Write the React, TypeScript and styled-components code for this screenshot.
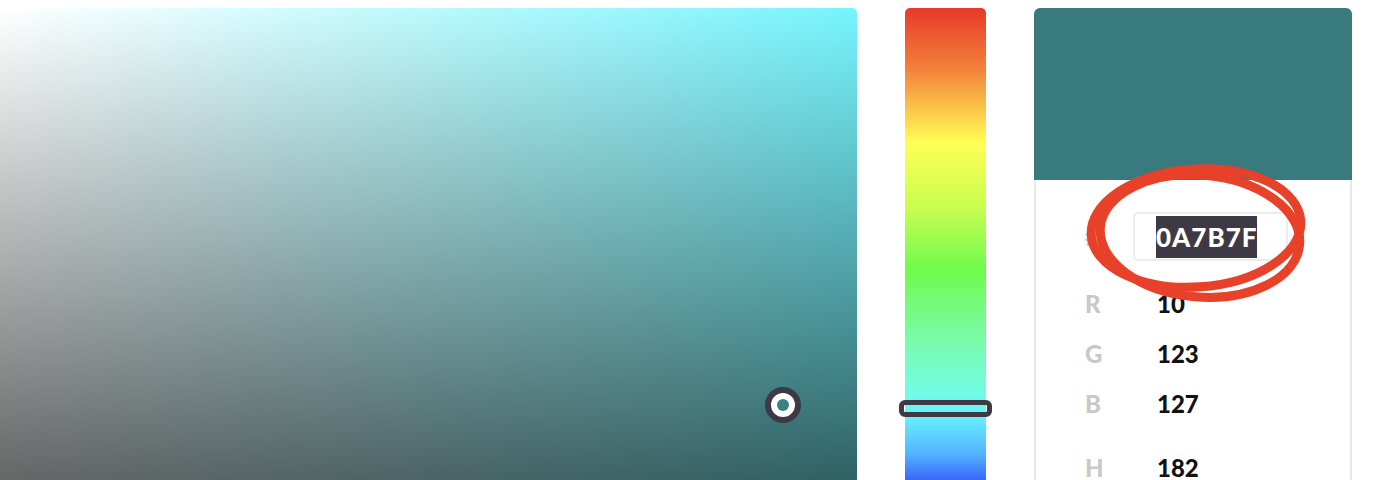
import React from 'react'
import styled, { createGlobalStyle } from 'styled-components'

const GlobalStyle = createGlobalStyle`
  html, body {
    margin: 0;
    padding: 0;
    background: #ffffff;
    overflow: hidden;
  }
  body {
    font-family: 'Lato', 'Liberation Sans', sans-serif;
  }
`

const INK = '#3d3a45'

const channels = [
  { label: 'R', value: '10' },
  { label: 'G', value: '123' },
  { label: 'B', value: '127' },
]

export default function App(): JSX.Element {
  return (
    <>
      <GlobalStyle />
      <Page>
        <Field>
          <Handle>
            <Dot />
          </Handle>
        </Field>
        <HueStrip>
          <HueMarker />
        </HueStrip>
        <Panel>
          <Swatch />
          <Body>
            <HexRow>
              <Label>#</Label>
              <HexBox>
                <Selected>0A7B7F</Selected>
              </HexBox>
            </HexRow>
            {channels.map((c) => (
              <Row key={c.label}>
                <Label>{c.label}</Label>
                <Value>{c.value}</Value>
              </Row>
            ))}
            <Row $gap>
              <Label>H</Label>
              <Value>182</Value>
            </Row>
          </Body>
          <Scribble viewBox="0 0 240 150" width="240" height="150">
            <ellipse
              cx="116"
              cy="68"
              rx="105"
              ry="59"
              transform="rotate(-4 116 68)"
              fill="none"
              stroke="#e8412a"
              strokeWidth="9"
            />
            <ellipse
              cx="120"
              cy="76"
              rx="100"
              ry="61"
              transform="rotate(5 120 76)"
              fill="none"
              stroke="#e8412a"
              strokeWidth="9"
            />
          </Scribble>
        </Panel>
      </Page>
    </>
  )
}

const Page = styled.div`
  display: flex;
  gap: 48px;
  height: 480px;
  padding: 8px 48px 0 0;
  box-sizing: border-box;
  overflow: hidden;
`

const Field = styled.div`
  position: relative;
  flex: 1;
  height: 472px;
  border-top-right-radius: 5px;
  background: linear-gradient(to bottom, rgba(0, 0, 0, 0) 0%, rgba(0, 0, 0, 0.6) 100%),
    linear-gradient(to right, #ffffff 0%, rgba(255, 255, 255, 0) 100%), #76f4fc;
`

const Handle = styled.div`
  position: absolute;
  left: 765px;
  top: 379px;
  width: 36px;
  height: 36px;
  box-sizing: border-box;
  border: 6px solid ${INK};
  border-radius: 50%;
  background: #ffffff;
  display: flex;
  align-items: center;
  justify-content: center;
`

const Dot = styled.div`
  width: 12px;
  height: 12px;
  border-radius: 50%;
  background: #3b8085;
`

const HueStrip = styled.div`
  position: relative;
  width: 81px;
  height: 472px;
  border-radius: 5px 5px 0 0;
  background: linear-gradient(
    to bottom,
    #e8392a 0px,
    #f3803a 60px,
    #ffff55 135px,
    #c8fd50 200px,
    #6ffb4d 262px,
    #7afbae 335px,
    #72fbe6 385px,
    #66eeff 410px,
    #55b5ff 445px,
    #3868fa 472px
  );
`

const HueMarker = styled.div`
  position: absolute;
  left: -6px;
  right: -6px;
  top: 392px;
  height: 17px;
  box-sizing: border-box;
  border: 5px solid ${INK};
  border-radius: 6px;
`

const Panel = styled.div`
  position: relative;
  width: 318px;
  display: flex;
  flex-direction: column;
`

const Swatch = styled.div`
  flex-shrink: 0;
  height: 172px;
  background: #387a7e;
  border-radius: 6px 6px 0 0;
`

const Body = styled.div`
  flex: 1;
  min-height: 0;
  overflow: hidden;
  border-left: 2px solid #e9e9e9;
  border-right: 2px solid #e9e9e9;
  padding: 32px 0 0 49px;
  display: flex;
  flex-direction: column;
`

const HexRow = styled.div`
  flex-shrink: 0;
  display: flex;
  align-items: center;
  height: 49px;
  margin-bottom: 17px;
`

const Row = styled.div<{ $gap?: boolean }>`
  flex-shrink: 0;
  display: flex;
  align-items: center;
  height: 50px;
  margin-top: ${(p) => (p.$gap ? '14px' : '0')};
`

const Label = styled.div`
  width: 48px;
  font-size: 24px;
  font-weight: 900;
  color: #c8c8c8;
`

const HexBox = styled.div`
  width: 155px;
  height: 49px;
  box-sizing: border-box;
  border: 2px solid #ececec;
  border-radius: 5px;
  padding-left: 21px;
  display: flex;
  align-items: center;
`

const Selected = styled.span`
  background: ${INK};
  color: #ffffff;
  font-size: 26px;
  font-weight: 900;
  line-height: 42px;
  letter-spacing: 1px;
`

const Value = styled.div`
  padding-left: 24px;
  font-size: 24px;
  font-weight: 900;
  color: #111111;
`

const Scribble = styled.svg`
  position: absolute;
  left: 46px;
  top: 152px;
  pointer-events: none;
`
